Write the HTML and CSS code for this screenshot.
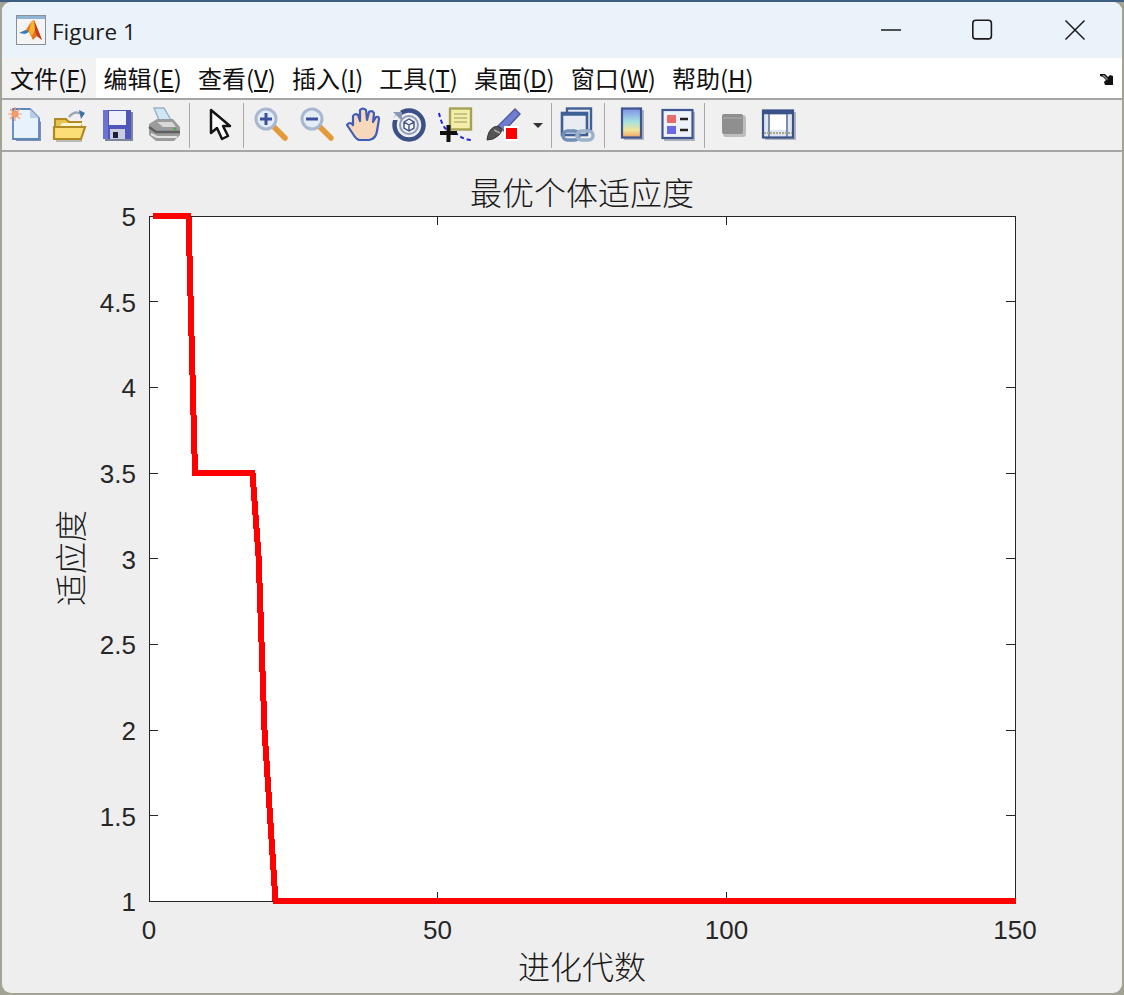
FILE: index.html
```html
<!DOCTYPE html>
<html lang="zh">
<head>
<meta charset="utf-8">
<title>Figure 1</title>
<link rel="stylesheet" href="styles.css">
</head>
<body>
<div class="window">
  <header class="titlebar">
    <svg class="app-icon" width="31" height="30" viewBox="0 0 31 30">
      <rect x="0.5" y="0.5" width="29" height="29" fill="#f4f4f4" stroke="#8a8f96"/>
      <rect x="1" y="1" width="28" height="3" fill="#8fb4d6"/>
      <path d="M3 18l7-3 5-8 3-2 8 20-5-4-4 4-4-8-3-1z" fill="#e8701f"/>
      <path d="M3 18l7-3 3 2-4 2z" fill="#2f7fc1"/>
      <path d="M18 5l8 20-5-4-2-6z" fill="#c9381a"/>
      <path d="M15 7l3-2 1 10-3 6-3-4z" fill="#f5b52e"/>
    </svg>
    <span class="title-text">Figure 1</span>
    <div class="controls">
      <svg class="ctl" width="92" height="24" viewBox="0 0 22 24"><path d="M1 12h20" stroke="#1a1a1a" stroke-width="1.6"/></svg>
      <svg class="ctl" width="92" height="24" viewBox="0 0 22 24"><rect x="0.8" y="2.3" width="18.6" height="18.6" rx="3" fill="none" stroke="#1a1a1a" stroke-width="1.6"/></svg>
      <svg class="ctl" width="92" height="24" viewBox="0 0 22 24"><path d="M1.5 2.500l19 19M20.500 2.500l-19 19" stroke="#1a1a1a" stroke-width="1.500"/></svg>
    </div>
  </header>

  <nav class="menubar">
    <span class="menu-item menu-item-active">文件(<u>F</u>)</span>
    <span class="menu-item">编辑(<u>E</u>)</span>
    <span class="menu-item">查看(<u>V</u>)</span>
    <span class="menu-item">插入(<u>I</u>)</span>
    <span class="menu-item">工具(<u>T</u>)</span>
    <span class="menu-item">桌面(<u>D</u>)</span>
    <span class="menu-item">窗口(<u>W</u>)</span>
    <span class="menu-item">帮助(<u>H</u>)</span>
    <svg class="dock-arrow" width="16" height="14" viewBox="0 0 16 14"><path d="M1 2h5l3 3 2-2 3 1v9H6l-1-3 2-2-3-3-3-1z" fill="#111"/><path d="M3 3h2l4 4-1 1z" fill="#fff" opacity=".55"/></svg>
  </nav>

  <div class="toolbar">
    <svg class="ico" viewBox="0 0 36 36"><path d="M8 5h15l10 10v19H8z" fill="#7f8db0"/><path d="M5 2h17l9 9v21H5z" fill="#e8f2fc" stroke="#5f86bb" stroke-width="1.800"/><path d="M22 2v9h9z" fill="#b9cce6"/><circle cx="7" cy="7" r="3.500" fill="#f08a4f"/><path d="M7 0v14M0 7h14M2 2l10 10M12 2L2 12" stroke="#f2a071" stroke-width="1.200"/></svg>
    <svg class="ico" viewBox="0 0 36 36"><path d="M17 10q6-7 12-3" fill="none" stroke="#9aa6b5" stroke-width="2.400"/><path d="M27 3l6 3-4 6z" fill="#3f6fa8"/><path d="M3 12h11l3 3h12v6H3z" fill="#e8c24f" stroke="#b08a22" stroke-width="2"/><path d="M2 32V20h31l-4 12z" fill="#fbdf76" stroke="#b08a22" stroke-width="2.200"/><path d="M8 19h21l1-3H10z" fill="#fff6cf"/><path d="M4 34h26" stroke="#a9a9a0" stroke-width="1.500"/></svg>
    <svg class="ico" viewBox="0 0 36 36"><path d="M5 5h28v29H5z" fill="#7b8799"/><path d="M3 3h28v29H3z" fill="#4f57bd"/><path d="M3 3h5v29H3z" fill="#6b73d4"/><rect x="9" y="4" width="17" height="14" fill="#eef1fb"/><rect x="10" y="22" width="15" height="10" fill="#c9cce0"/><rect x="13" y="25" width="5" height="6" fill="#1d1f33"/></svg>
    <svg class="ico" viewBox="0 0 36 36"><path d="M9 1h10l7 12H14z" fill="#cfe6f5" stroke="#9ab1c4" stroke-width="1.400"/><path d="M4 17l8-5h16l7 8v8l-6 6H11l-7-6z" fill="#9b9b9b"/><path d="M4 20l7 5h24" fill="none" stroke="#5f5f5f" stroke-width="2.400"/><path d="M6 27l6 3h20" fill="none" stroke="#e3e3e3" stroke-width="2.200"/><path d="M12 15h15l4 5H18z" fill="#d8d8d8"/><circle cx="30" cy="22" r="1.400" fill="#3fb04a"/></svg>
    <span class="sep"></span>
    <svg class="ico" viewBox="0 0 36 36"><path d="M9 3v23l6-5 5 11 6-3-5-10h7z" fill="#fff" stroke="#151515" stroke-width="2.500" stroke-linejoin="round"/></svg>
    <span class="sep sep-tight"></span>
    <svg class="ico" viewBox="0 0 36 36"><path d="M22 20l11 11" stroke="#e59a3a" stroke-width="5.500" stroke-linecap="round"/><circle cx="14" cy="12" r="10" fill="#e3edf7" stroke="#a9b8d0" stroke-width="3"/><path d="M8 12h12M14 6v12" stroke="#3c4f9c" stroke-width="3"/></svg>
    <svg class="ico" viewBox="0 0 36 36"><path d="M21 20l11 11" stroke="#e59a3a" stroke-width="5.500" stroke-linecap="round"/><circle cx="13" cy="12" r="10" fill="#e3edf7" stroke="#a9b8d0" stroke-width="3"/><path d="M7 12h12" stroke="#3c4f9c" stroke-width="3"/></svg>
    <svg class="ico" viewBox="0 0 36 36"><path d="M2 18q3-4 6 0l0-9q2-3 5-1l2 6 0-11q3-3 6 0l1 10 2-8q3-2 5 1l-1 9 3-5q3-1 3 2l-2 12q-1 8-8 9H14q-3-1-6-6z" fill="#f8d8bd" stroke="#3f5cb8" stroke-width="2.200" stroke-linejoin="round"/></svg>
    <svg class="ico" viewBox="0 0 36 36"><circle cx="18" cy="18" r="14.500" fill="#efefef" stroke="#3b5185" stroke-width="4.500"/><path d="M1 13h11L9 3z" fill="#efefef"/><path d="M2 5l9 0 0 9z" fill="#8b98b5"/><circle cx="18" cy="18" r="9" fill="none" stroke="#8e9ab5" stroke-width="2"/><path d="M13 15l5-3 5 3v6l-5 3-5-3zM13 15l5 3 5-3M18 18v6" fill="#f7f7f7" stroke="#3b5185" stroke-width="1.400"/></svg>
    <svg class="ico" viewBox="0 0 36 36"><rect x="13" y="1.500" width="21" height="21" fill="#f5eea8" stroke="#a6a255" stroke-width="2.400"/><path d="M17 7h13M17 11h13M17 15h13" stroke="#b8b47a" stroke-width="1.700"/><path d="M2 6q3 14 9 18" fill="none" stroke="#2222dd" stroke-width="2" stroke-dasharray="4 3"/><path d="M18 25q6 7 16 8" fill="none" stroke="#2222dd" stroke-width="2" stroke-dasharray="4 3"/><path d="M3 26h17M11.500 18v17" stroke="#111" stroke-width="4"/></svg>
    <svg class="ico" viewBox="0 0 36 36"><path d="M13 19L30 2l5 5-16 17z" fill="#6f7dd0" stroke="#4f5a9e" stroke-width="1.400"/><path d="M2 33q1-10 7-13 4-2 7 1 2 3-2 7-5 5-12 5z" fill="#555" stroke="#333"/><path d="M9 23l6 3" stroke="#aaa" stroke-width="1.500"/><rect x="19" y="19" width="15" height="15" fill="#fff"/><rect x="21" y="21" width="11" height="11" fill="#ff0000"/></svg>
    <svg class="drop" viewBox="0 0 24 36"><path d="M7 16h10l-5 5z" fill="#333"/></svg>
    <span class="sep sep-tight"></span>
    <svg class="ico" viewBox="0 0 36 36"><rect x="8" y="1.500" width="24" height="22" fill="#e9edf3" stroke="#3f6095" stroke-width="2.400"/><rect x="3" y="6" width="25" height="22" fill="#e9edf3" stroke="#3f6095" stroke-width="2.600"/><path d="M3 7h25" stroke="#3f6095" stroke-width="3.500"/><rect x="4" y="24" width="16" height="9" rx="4.500" fill="none" stroke="#6f8fb5" stroke-width="3.500"/><rect x="18" y="24" width="16" height="9" rx="4.500" fill="none" stroke="#9cb2cc" stroke-width="3.500"/></svg>
    <span class="sep sep-tight"></span>
    <svg class="ico" viewBox="0 0 36 36"><defs><linearGradient id="cbar" x1="0" y1="0" x2="0" y2="1"><stop offset="0" stop-color="#7f8fe8"/><stop offset=".45" stop-color="#a6e0e0"/><stop offset=".75" stop-color="#f2e59a"/><stop offset="1" stop-color="#f0a060"/></linearGradient></defs><rect x="10" y="3" width="20" height="30" fill="#aeb4bf"/><rect x="8" y="1.500" width="19" height="29" fill="url(#cbar)" stroke="#3f5590" stroke-width="2.200"/></svg>
    <svg class="ico" viewBox="0 0 36 36"><rect x="5" y="5" width="31" height="29" fill="#aeb4bf"/><rect x="3.500" y="3" width="30" height="28" fill="#eef2fa" stroke="#3f5590" stroke-width="2.200"/><rect x="8" y="8" width="9" height="8" fill="#e86a6a"/><rect x="8" y="19" width="9" height="8" fill="#6a6ae8"/><path d="M21 12h8M21 23h8" stroke="#222" stroke-width="2.600"/></svg>
    <span class="sep"></span>
    <svg class="ico" viewBox="0 0 36 36"><rect x="8" y="8" width="23" height="22" rx="3" fill="#bdbdbd"/><rect x="7" y="7" width="21" height="20" rx="2" fill="#8f8f8f"/><path d="M8 11h19" stroke="#a5a5a5" stroke-width="1.500"/></svg>
    <svg class="ico" viewBox="0 0 36 36"><rect x="5" y="5" width="31" height="28" fill="#aeb4bf"/><rect x="3" y="3.500" width="30" height="27" fill="#dfe5f0" stroke="#3a5288" stroke-width="2.200"/><path d="M3 5.500h30" stroke="#3a5288" stroke-width="3.500"/><rect x="10" y="8" width="16" height="15" fill="#fff"/><path d="M9 6v24M27 6v24" stroke="#3a5288" stroke-width="1.200"/><path d="M4 26h28" stroke="#a9a98c" stroke-width="2" stroke-dasharray="2 1"/></svg>
  </div>

  <main class="figure">
    <svg class="plot" width="1120" height="841" viewBox="2 152 1120 841">
      <rect class="axes-bg" x="149" y="216" width="866" height="685"/>
      <path class="axes-box" d="M149.500 216.500H1015.500V901.500H149.500Z"/>
      <path class="ticks" d="M437.500 216v9M726.500 216v9M437.500 901v-9M726.500 901v-9M149 301.500h9M149 387.500h9M149 473.500h9M149 558.500h9M149 644.500h9M149 730.500h9M149 815.500h9M1015 301.500h-9M1015 387.500h-9M1015 473.500h-9M1015 558.500h-9M1015 644.500h-9M1015 730.500h-9M1015 815.500h-9"/>
      <path class="line-path" d="M153 216H188.500L195 473H252.500L258.700 558.600L264.500 730L275.500 901H1016"/>
      <g class="tick-y">
        <text x="136" y="226">5</text><text x="136" y="312">4.5</text><text x="136" y="397">4</text><text x="136" y="483">3.5</text><text x="136" y="569">3</text><text x="136" y="654">2.5</text><text x="136" y="740">2</text><text x="136" y="826">1.5</text><text x="136" y="911">1</text>
      </g>
      <g class="tick-x">
        <text x="149" y="939">0</text><text x="437.500" y="939">50</text><text x="726.500" y="939">100</text><text x="1015" y="939">150</text>
      </g>
      <text class="cjk-label" x="582" y="205">最优个体适应度</text>
      <text class="cjk-label" x="582" y="979">进化代数</text>
      <text class="cjk-label" transform="translate(83 558) rotate(-90)">适应度</text>
    </svg>
  </main>
</div>
</body>
</html>
```
FILE: styles.css
```css
html, body {
  margin: 0;
  padding: 0;
}
body {
  width: 1124px;
  height: 995px;
  overflow: hidden;
  background: linear-gradient(to bottom, #3d5f84 0, #3d5f84 2px, #a3a394 2px);
  font-family: "Noto Sans CJK SC", "Open Sans", sans-serif;
}
.window {
  box-sizing: border-box;
  width: 1120px;
  height: 991px;
  margin: 2px;
  display: flex;
  flex-direction: column;
  border-radius: 9px;
  overflow: hidden;
  background: #eeeeee;
}
.titlebar {
  height: 56px;
  flex: none;
  display: flex;
  align-items: center;
  background: #ebf3fa;
  padding-left: 14px;
}
.app-icon {
  flex: none;
}
.title-text {
  margin-left: 5px;
  padding-top: 2px;
  font-family: "Open Sans", sans-serif;
  font-size: 22.500px;
  color: #1b1b1b;
}
.controls {
  margin-left: auto;
  display: flex;
  padding-right: 1px;
}
.ctl {
  display: block;
}
.menubar {
  height: 40px;
  flex: none;
  display: flex;
  align-items: stretch;
  background: #ffffff;
  border-bottom: 2px solid #a6a6a6;
  position: relative;
}
.menu-item {
  display: flex;
  align-items: center;
  justify-content: center;
  white-space: pre;
  padding: 0 8px 2px;
  font-size: 24px;
  color: #111111;
}
.menu-item-active {
  background: #f2f2f2;
}
.dock-arrow {
  position: absolute;
  right: 7px;
  top: 14px;
}
.toolbar {
  height: 52px;
  flex: none;
  box-sizing: border-box;
  display: grid;
  grid-template-columns: 44px 44px 52px 38px 15px 45px 2px 52px 42px 50px 42px 50px 46px 24px 2px 50px 4px 52px 38px 16px 42px 48px;
  align-items: center;
  justify-items: center;
  padding-left: 2px;
  background: #f0f0f0;
  border-bottom: 2px solid #a6a6a6;
}
.ico {
  width: 36px;
  height: 36px;
  display: block;
  filter: blur(0.5px);
}
.drop {
  width: 24px;
  height: 36px;
  display: block;
}
.sep {
  width: 1px;
  height: 45px;
  background: #a8a8a8;
}
.figure {
  flex: 1;
  min-height: 0;
}
.plot {
  display: block;
}
.axes-bg {
  fill: #ffffff;
}
.axes-box {
  fill: none;
  stroke: #262626;
  stroke-width: 1;
  shape-rendering: crispEdges;
}
.ticks {
  fill: none;
  stroke: #262626;
  stroke-width: 1;
  shape-rendering: crispEdges;
}
.line-path {
  fill: none;
  stroke: #ff0000;
  stroke-width: 6;
  stroke-linejoin: miter;
  shape-rendering: crispEdges;
}
.tick-y text,
.tick-x text {
  font-family: "Liberation Sans", Arial, sans-serif;
  font-size: 26px;
  fill: #262626;
}
.tick-y text {
  text-anchor: end;
}
.tick-x text {
  text-anchor: middle;
}
.cjk-label {
  font-family: "Noto Sans CJK SC", sans-serif;
  font-weight: 300;
  font-size: 32px;
  fill: #1a1a1a;
  text-anchor: middle;
}
```
